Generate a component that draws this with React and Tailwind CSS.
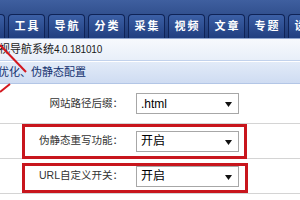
import React from "react";

const tabs = ["", "工具", "导航", "分类", "采集", "视频", "文章", "专题", "设置"];

function Select({ value }) {
  return (
    <div className="relative flex h-[21px] w-[103px] items-center border border-[#a7a7a7] bg-white pl-[4px] text-[12px] text-black">
      <span className="leading-none">{value}</span>
      <svg className="absolute right-[6px] top-[8px]" width="7" height="5" viewBox="0 0 7 5">
        <path d="M0 0 L7 0 L3.5 5 Z" fill="#111" />
      </svg>
    </div>
  );
}

function Row({ label, value, h }) {
  return (
    <div className={`flex ${h} items-center border-b border-[#d4d4d4]`}>
      <div className="w-[125px] shrink-0 pr-[2px] text-right text-[10.5px] text-[#333]">{label}</div>
      <div className="ml-[11px]">
        <Select value={value} />
      </div>
    </div>
  );
}

export default function App() {
  return (
    <div
      className="relative h-[200px] w-[300px] overflow-hidden bg-white"
      style={{ fontFamily: '"Liberation Sans", "Noto Sans CJK SC", sans-serif' }}
    >
      {/* nav bar */}
      <div className="flex h-[38px] items-end bg-gradient-to-b from-[#3f5f9f] to-[#1e3a76]">
        <div className="ml-[-32px] flex gap-[3px]">
          {tabs.map((t, i) => (
            <div
              key={i}
              className="flex h-[24px] w-[37px] shrink-0 items-center justify-center rounded-t-[4px] border border-b-0 border-[#0f2356] bg-gradient-to-b from-[#3c60a6] to-[#213f80] text-[11px] font-bold tracking-[2px] text-white"
            >
              <span className="pl-[2px]">{t}</span>
            </div>
          ))}
        </div>
      </div>
      {/* version row */}
      <div className="flex h-[23px] items-center border-t border-[#8fa6cf] border-b border-b-[#c2d2ec] bg-gradient-to-b from-[#f7f9fd] to-[#e8eff9] text-[11px] text-[#1a1a1a]">
        <span className="ml-[-1px]">视导航系统</span>
        <span className="text-[10px] tracking-[-0.2px]">4.0.181010</span>
      </div>
      {/* section header */}
      <div className="flex h-[23px] items-center border-t border-white border-b border-b-[#b3c6e6] bg-gradient-to-b from-[#e2ebf8] to-[#cfdcf2] text-[11px] text-[#12306e]">
        <span className="ml-[-2px]">优化、伪静态配置</span>
      </div>
      {/* form rows */}
      <Row label="网站路径后缀：" value=".html" h="h-[40px]" />
      <Row label="伪静态重写功能：" value="开启" h="h-[35px]" />
      <Row label="URL自定义开关：" value="开启" h="h-[35px]" />

      {/* annotation boxes */}
      <div className="absolute left-[22px] top-[124px] h-[35px] w-[225px] border-[3px] border-[#c8161d]" />
      <div className="absolute left-[22px] top-[163px] h-[30px] w-[226px] border-[3px] border-[#c8161d]" />
      {/* annotation arrows */}
      <svg className="absolute left-0 top-0" width="300" height="200" viewBox="0 0 300 200">
        <line x1="0" y1="45" x2="26" y2="72" stroke="#d3181f" strokeWidth="2" />
        <line x1="0" y1="92" x2="10" y2="84" stroke="#d3181f" strokeWidth="2" />
      </svg>
    </div>
  );
}
